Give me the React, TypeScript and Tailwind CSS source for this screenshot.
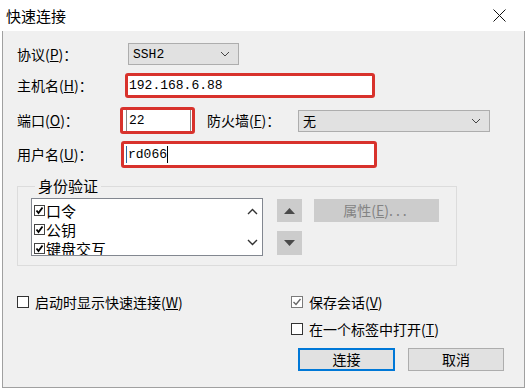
const cjk = { fontFamily: '"Noto Sans CJK SC", "Noto Sans", sans-serif' };
const mono = { fontFamily: '"Liberation Mono", "DejaVu Sans Mono", monospace' };

function Key({ text, k }: { text: string; k: string }) {
  return (
    <span className="whitespace-nowrap">
      {text}(<u>{k}</u>)
    </span>
  );
}

function Chevron() {
  return (
    <svg width="10" height="6" viewBox="0 0 10 6" className="shrink-0">
      <polyline points="1,1 5,5 9,1" fill="none" stroke="#444" strokeWidth="1" />
    </svg>
  );
}

function Combo({ value, width, isMono }: { value: string; width: string; isMono?: boolean }) {
  return (
    <div
      className={`${width} h-[22px] bg-[#e1e1e1] border border-[#adadad] flex items-center justify-between pl-[4px] pr-[8px]`}
    >
      <span className="text-[13px] leading-none" style={isMono ? mono : cjk}>
        {value}
      </span>
      <Chevron />
    </div>
  );
}

function SmallCheck({ checked, light }: { checked: boolean; light?: boolean }) {
  return (
    <span
      className={`w-[12px] h-[12px] shrink-0 border flex items-center justify-center bg-white ${
        light ? "border-[#7a7a7a]" : "border-[#333]"
      }`}
    >
      {checked && (
        <svg width="10" height="10" viewBox="0 0 10 10">
          <polyline points="1.5,5 4,7.5 8.5,2" fill="none" stroke={light ? "#666" : "#111"} strokeWidth="1.4" />
        </svg>
      )}
    </span>
  );
}

function ListItem({ label }: { label: string }) {
  return (
    <div className="flex items-center h-[19px] gap-[1px]">
      <span className="w-[11px] h-[11px] border border-[#444] flex items-center justify-center bg-white">
        <svg width="9" height="9" viewBox="0 0 9 9">
          <polyline points="1.5,4.5 3.5,7 7.5,1.5" fill="none" stroke="#000" strokeWidth="1.8" />
        </svg>
      </span>
      <span className="text-[15px] leading-none">{label}</span>
    </div>
  );
}

export default function App() {
  return (
    <div className="w-[526px] h-[390px] bg-white flex flex-col overflow-hidden text-black" style={cjk}>
      <div className="h-[31px] flex items-center justify-between pl-[6px] pr-[20px]">
        <span className="text-[15px] leading-none">快速连接</span>
        <svg width="13" height="13" viewBox="0 0 13 13">
          <line x1="0.5" y1="0.5" x2="12.5" y2="12.5" stroke="#111" strokeWidth="1" />
          <line x1="12.5" y1="0.5" x2="0.5" y2="12.5" stroke="#111" strokeWidth="1" />
        </svg>
      </div>

      <div className="h-[357px] ml-[2px] mr-[1px] bg-[#f0f0f0] border border-t-0 border-[#a0a0a0] pl-[14px] text-[14px]">
        {/* protocol */}
        <div className="mt-[12px] h-[22px] flex items-center">
          <span className="w-[111px]">
            <Key text="协议" k="P" />：
          </span>
          <Combo value="SSH2" width="w-[111px]" isMono />
        </div>

        {/* host */}
        <div className="mt-[8px] h-[25px] flex items-center">
          <span className="w-[108px]">
            <Key text="主机名" k="H" />：
          </span>
          <div className="w-[250px] h-[25px] border-[3px] border-[#d8322c] rounded-[3px] bg-white flex items-center pl-[1px]">
            <span className="text-[13px] leading-none" style={mono}>
              192.168.6.88
            </span>
          </div>
        </div>

        {/* port + firewall */}
        <div className="mt-[9px] h-[27px] flex items-center">
          <span className="w-[103px]">
            <Key text="端口" k="O" />：
          </span>
          <div className="w-[75px] h-[27px] border-[3px] border-[#d8322c] rounded-[3px] bg-white flex pl-[3px] pr-[1px]">
            <div className="flex-1 border-x border-[#8a8a8a] flex items-center pl-[2px]">
              <span className="text-[13px] leading-none" style={mono}>
                22
              </span>
            </div>
          </div>
          <span className="ml-[12px] w-[91px]">
            <Key text="防火墙" k="F" />：
          </span>
          <Combo value="无" width="w-[192px]" />
        </div>

        {/* username */}
        <div className="mt-[7px] h-[27px] flex items-center">
          <span className="w-[104px]">
            <Key text="用户名" k="U" />：
          </span>
          <div className="w-[256px] h-[27px] border-[3px] border-[#d8322c] rounded-[3px] bg-white flex items-center pl-[2px]">
            <span className="w-px h-[17px] bg-[#2b6aa0]" />
            <span className="text-[13px] leading-none ml-[1px]" style={mono}>
              rd066
            </span>
            <span className="w-px h-[17px] bg-black" />
          </div>
        </div>

        {/* auth group */}
        <fieldset className="mt-[10px] w-[440px] border border-[#dcdcdc] pl-[13px] pb-[9px]">
          <legend className="ml-[4px] px-[3px] text-[15px] leading-[16px]">身份验证</legend>
          <div className="mt-[4px] flex items-start">
            <div className="w-[232px] h-[58px] bg-white border border-[#828790] flex overflow-hidden">
              <div className="flex-1 pl-[2px] pt-[2px]">
                <ListItem label="口令" />
                <ListItem label="公钥" />
                <ListItem label="键盘交互" />
              </div>
              <div className="w-[20px] flex flex-col items-center justify-between py-[9px]">
                <svg width="11" height="7" viewBox="0 0 11 7">
                  <polyline points="1,6 5.5,1.5 10,6" fill="none" stroke="#333" strokeWidth="1.4" />
                </svg>
                <svg width="11" height="7" viewBox="0 0 11 7">
                  <polyline points="1,1 5.5,5.5 10,1" fill="none" stroke="#333" strokeWidth="1.4" />
                </svg>
              </div>
            </div>
            <div className="ml-[14px] flex flex-col gap-[9px] mt-[1px]">
              <div className="w-[25px] h-[23px] bg-[#cccccc] flex items-center justify-center">
                <svg width="11" height="6" viewBox="0 0 11 6">
                  <polygon points="0,6 5.5,0 11,6" fill="#4a4a4a" />
                </svg>
              </div>
              <div className="w-[25px] h-[24px] bg-[#cccccc] flex items-center justify-center">
                <svg width="11" height="6" viewBox="0 0 11 6">
                  <polygon points="0,0 11,0 5.5,6" fill="#4a4a4a" />
                </svg>
              </div>
            </div>
            <div className="ml-[12px] mt-[1px] w-[125px] h-[23px] bg-[#cccccc] flex items-center justify-center text-[#838383] text-[14px]">
              <Key text="属性" k="E" />
              <span className="tracking-[3px]">...</span>
            </div>
          </div>
        </fieldset>

        {/* options */}
        <div className="mt-[28px] flex">
          <div className="w-[274px] h-[16px] flex items-center gap-[6px]">
            <SmallCheck checked={false} />
            <Key text="启动时显示快速连接" k="W" />
          </div>
          <div className="flex flex-col">
            <div className="h-[16px] flex items-center gap-[6px]">
              <SmallCheck checked light />
              <Key text="保存会话" k="V" />
            </div>
            <div className="mt-[11px] h-[16px] flex items-center gap-[6px]">
              <SmallCheck checked={false} />
              <Key text="在一个标签中打开" k="T" />
            </div>
            <div className="mt-[11px] ml-[7px] flex gap-[13px]">
              <button className="w-[97px] h-[23px] bg-[#e1e1e1] border-2 border-[#0078d7] flex items-center justify-center text-[14px]">
                连接
              </button>
              <button className="w-[96px] h-[23px] bg-[#e1e1e1] border border-[#adadad] flex items-center justify-center text-[14px]">
                取消
              </button>
            </div>
          </div>
        </div>
      </div>
    </div>
  );
}
